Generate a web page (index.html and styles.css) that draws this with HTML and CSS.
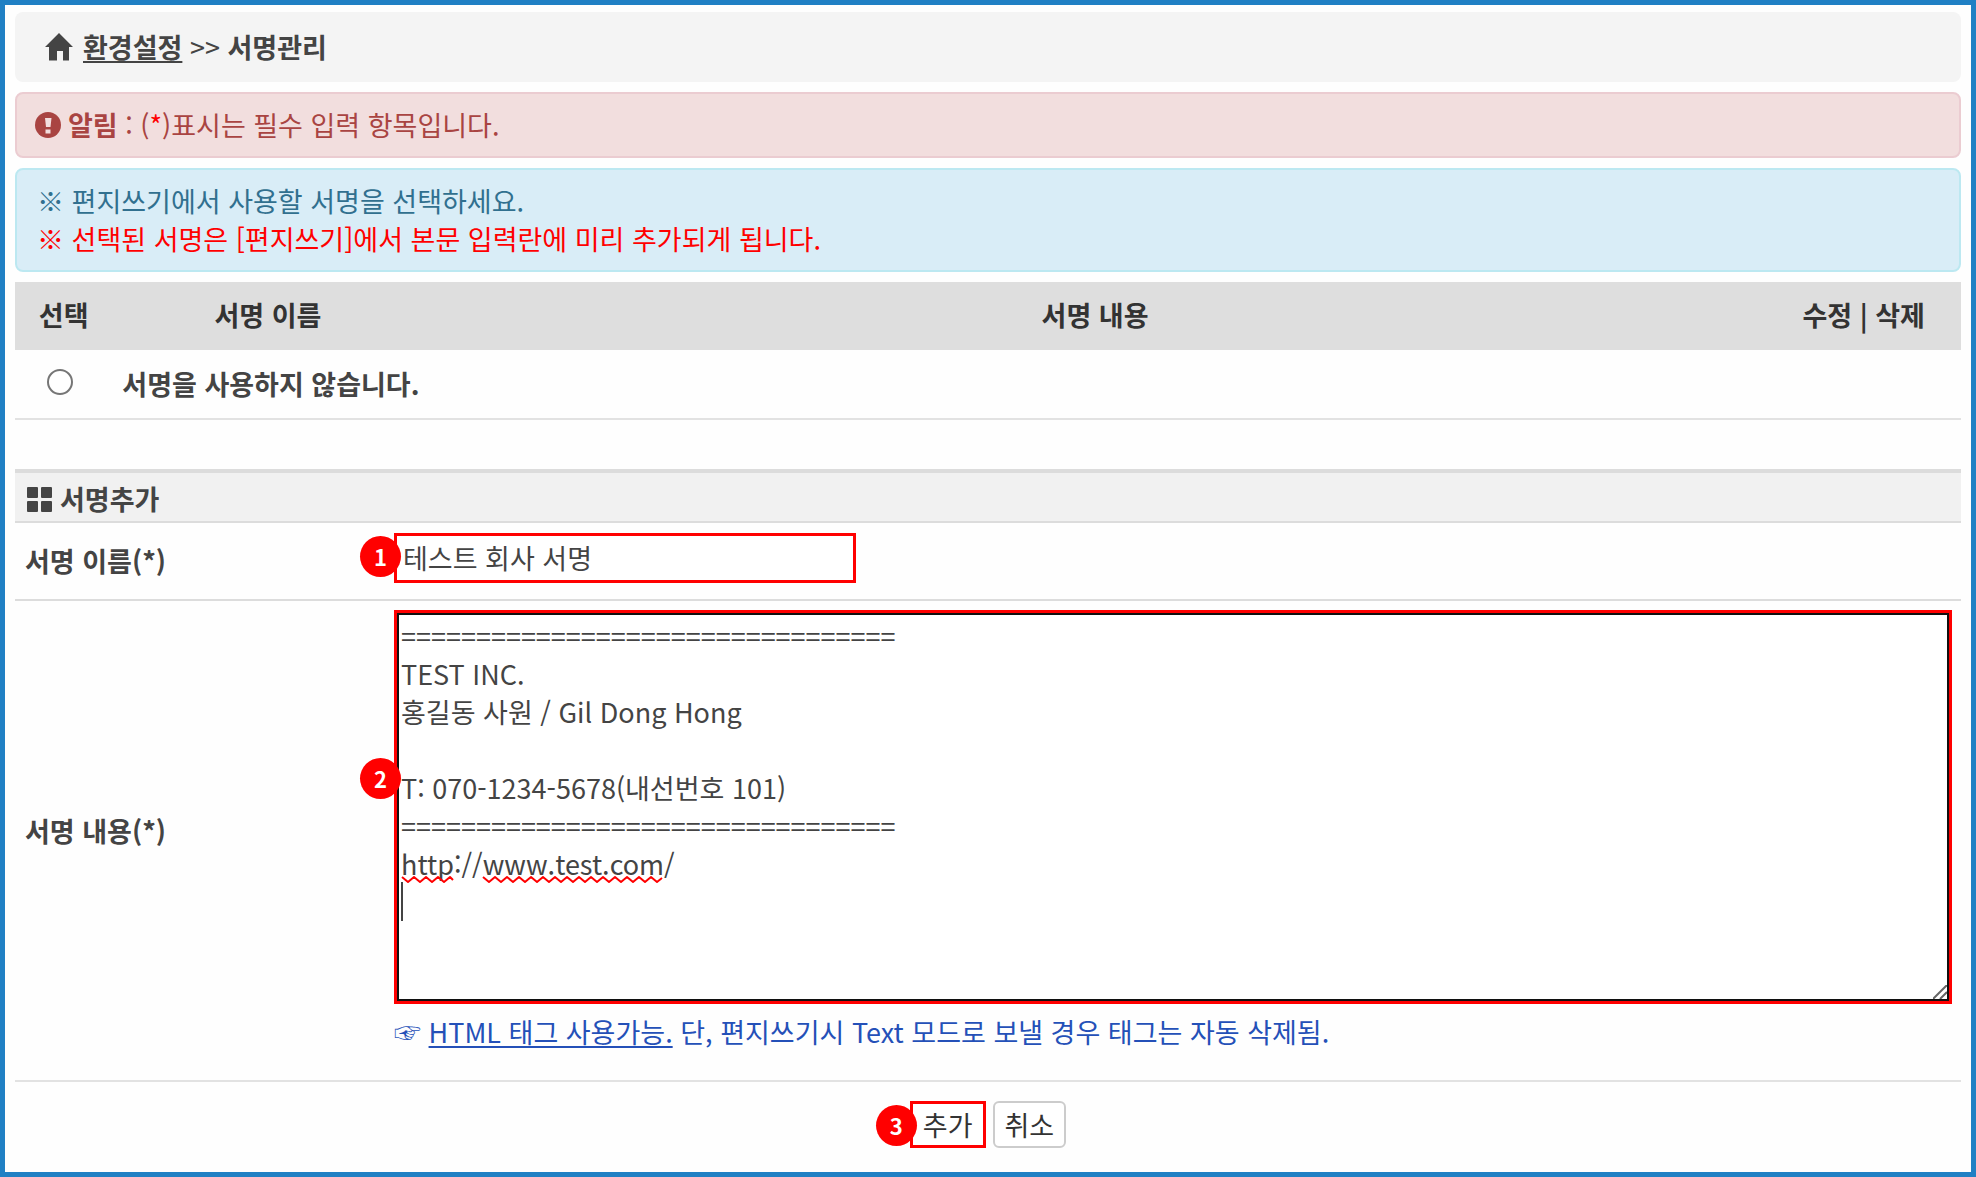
FILE: index.html
```html
<!DOCTYPE html>
<html lang="ko">
<head>
    <meta charset="UTF-8">
    <title>서명관리</title>
    <link rel="stylesheet" href="styles.css">
</head>
<body>
    <div class="breadcrumb">
        <svg class="icon-home" viewBox="0 0 28 28" aria-hidden="true">
            <path d="M14 0L28 14H24V27.5H18V18H12V27.5H4V14H0Z"/>
        </svg>
        <div><a href="#">환경설정</a> &gt;&gt; <strong>서명관리</strong></div>
    </div>

    <div class="alert alert-danger">
        <svg class="icon-alert" viewBox="0 0 26 26" aria-hidden="true">
            <circle cx="13" cy="13" r="13"/>
            <path class="mark" d="M10 6H16.500L15.500 15H11ZM10.500 17.500H15.500V21.500H10.500Z"/>
        </svg>
        <div><strong>알림</strong> : (<span class="red">*</span>)표시는 필수 입력 항목입니다.</div>
    </div>

    <div class="alert alert-info">
        <div>※ 편지쓰기에서 사용할 서명을 선택하세요.<br>
        <span class="red">※ 선택된 서명은 [편지쓰기]에서 본문 입력란에 미리 추가되게 됩니다.</span></div>
    </div>

    <form>
        <table class="sign-list">
            <thead>
                <tr>
                    <th class="col-select">선택</th>
                    <th class="col-name">서명 이름</th>
                    <th>서명 내용</th>
                    <th class="col-action">수정 | 삭제</th>
                </tr>
            </thead>
            <tbody>
                <tr>
                    <td class="cell-radio"><input type="radio" name="sign" id="signNone"></td>
                    <td class="cell-none" colspan="3"><label for="signNone">서명을 사용하지 않습니다.</label></td>
                </tr>
            </tbody>
        </table>

        <div class="section-title">
            <svg class="icon-grid" viewBox="0 0 25 25" aria-hidden="true">
                <rect width="11" height="11" rx="1"/>
                <rect x="14" width="11" height="11" rx="1"/>
                <rect y="14" width="11" height="11" rx="1"/>
                <rect x="14" y="14" width="11" height="11" rx="1"/>
            </svg>
            <strong>서명추가</strong>
        </div>

        <div class="form-row">
            <label for="signName">서명 이름(*)</label>
            <div class="field">
                <input type="text" id="signName" value="테스트 회사 서명">
                <span class="step">1</span>
            </div>
        </div>

        <div class="form-row">
            <label for="signContent">서명 내용(*)</label>
            <div class="field">
                <div class="editor">
                    <textarea id="signContent" spellcheck="false">=================================
TEST INC.
홍길동 사원 / Gil Dong Hong

T: 070-1234-5678(내선번호 101)
=================================
http://www.test.com/
</textarea>
                    <!-- spelling marks and caret -->
                    <svg class="marks" viewBox="0 0 264 46" aria-hidden="true">
                        <path class="wave" d="M1 2l6 5 6-5 6 5 6-5 6 5 6-5 6 5 6-5 3 3"/>
                        <path class="wave" d="M82 2l6 5 6-5 6 5 6-5 6 5 6-5 6 5 6-5 6 5 6-5 6 5 6-5 6 5 6-5 6 5 6-5 6 5 6-5 6 5 6-5 6 5 6-5 6 5 6-5 6 5 6-5 6 5 6-5 6 5 5-4"/>
                        <path class="caret" d="M1 7V46"/>
                    </svg>
                    <svg class="grip" viewBox="0 0 14 14" aria-hidden="true">
                        <path d="M0 14L14 0M7 14L14 7"/>
                    </svg>
                    <span class="step">2</span>
                </div>
                <p class="hint">☞ <a href="#">HTML 태그 사용가능.</a> 단, 편지쓰기시 Text 모드로 보낼 경우 태그는 자동 삭제됨.</p>
            </div>
        </div>

        <div class="buttons">
            <div class="field">
                <button type="submit" class="btn-add">추가</button>
                <span class="step">3</span>
            </div>
            <button type="button" class="btn-cancel">취소</button>
        </div>
    </form>
</body>
</html>
```

FILE: styles.css
```css
* {
    box-sizing: border-box;
}

body {
    min-height: 100vh;
    margin: 0;
    padding: 7px 10px 0;
    border: 5px solid #2080c4;
    background-color: #fefefe;
    color: #444;
    font-family: "Noto Sans CJK KR", sans-serif;
    font-size: 27px;
    line-height: 38px;
}

a {
    color: inherit;
    text-decoration: underline;
    text-decoration-thickness: 2px;
    text-underline-offset: 3px;
}

svg {
    display: block;
    flex: none;
    fill: currentColor;
}

.red {
    color: #f00;
}

.breadcrumb {
    display: flex;
    align-items: center;
    gap: 10px;
    margin-bottom: 10px;
    padding: 16px 30px;
    border-radius: 8px;
    background-color: #f4f4f4;
}

.breadcrumb a {
    font-weight: bold;
}

.icon-home {
    width: 28px;
    height: 28px;
}

.alert {
    display: flex;
    align-items: center;
    gap: 7px;
    margin-bottom: 10px;
    padding: 12px 18px;
    border: 2px solid;
    border-radius: 8px;
}

.alert-danger {
    border-color: #ebccd1;
    background-color: #f2dede;
    color: #a94442;
}

.alert-info {
    border-color: #bce8f1;
    background-color: #d9edf7;
    color: #31708f;
    padding: 12px 20px;
}

.icon-alert {
    width: 26px;
    height: 26px;
}

.icon-alert .mark {
    fill: #f2dede;
}

.sign-list {
    width: 100%;
    table-layout: fixed;
    border-spacing: 0;
}

.sign-list th {
    padding: 14px 0 16px;
    background-color: #dedede;
    color: #333;
}

.sign-list td {
    height: 70px;
    padding: 0 0 0 10px;
    border-bottom: 2px solid #e2e2e2;
}

.sign-list .cell-radio {
    padding: 0 8px 8px 0;
    line-height: 26px;
    text-align: center;
}

.cell-none {
    font-weight: bold;
}

.col-select {
    width: 5%;
}

.col-name {
    width: 16%;
}

.col-action {
    width: 10%;
}

input[type="radio"] {
    width: 26px;
    height: 26px;
    margin: 0;
    border: 2px solid #767676;
    border-radius: 50%;
    background-color: #fff;
    appearance: none;
    vertical-align: middle;
}

input[type="radio"]:checked {
    border-width: 8px;
}

.section-title {
    display: flex;
    align-items: center;
    gap: 8px;
    margin-top: 49px;
    padding: 7px 12px 3px;
    border-top: 4px solid #dcdcdc;
    border-bottom: 2px solid #dcdcdc;
    background-color: #f1f1f1;
}

.icon-grid {
    width: 25px;
    height: 25px;
}

.form-row {
    display: grid;
    grid-template-columns: 379px 1fr;
    align-items: center;
    padding: 9px 9px 9px 0;
}

.form-row + .form-row {
    border-top: 2px solid #dcdcdc;
}

.form-row > label {
    padding-left: 10px;
    font-weight: bold;
}

.field,
.editor {
    position: relative;
}

input[type="text"],
textarea,
button {
    color: inherit;
    font: inherit;
}

input[type="text"] {
    display: block;
    width: 462px;
    height: 50px;
    margin: 1px 0 7px;
    padding: 0 6px 1px;
    border: 3px solid #f00;
    background-color: #fff;
}

textarea {
    display: block;
    width: 100%;
    height: 394px;
    padding: 4px;
    border: 3px solid #f00;
    outline: 2px solid #101010;
    outline-offset: -5px;
    background-color: #fff;
    resize: none;
}

.marks {
    position: absolute;
    top: 265px;
    left: 7px;
    width: 264px;
    height: 46px;
    fill: none;
    pointer-events: none;
}

.wave {
    stroke: #f00;
    stroke-width: 2;
    stroke-linejoin: round;
}

.caret {
    stroke: #444;
    stroke-width: 2;
}

.grip {
    position: absolute;
    right: 5px;
    bottom: 5px;
    width: 14px;
    height: 14px;
    stroke: #666;
    stroke-width: 2;
    pointer-events: none;
}

.step {
    position: absolute;
    top: 4px;
    left: -34px;
    width: 41px;
    height: 41px;
    border-radius: 50%;
    background-color: #f00;
    color: #fff;
    font-size: 22px;
    font-weight: bold;
    line-height: 41px;
    text-align: center;
}

.editor .step {
    top: 148px;
}

.hint {
    margin: 9px 0 0;
    color: #2450b8;
}

.buttons {
    display: flex;
    justify-content: center;
    gap: 7px;
    margin-top: 20px;
    padding: 19px 0 24px;
    border-top: 2px solid #e2e2e2;
}

.btn-add,
.btn-cancel {
    height: 47px;
    padding: 0 10px;
    border: 3px solid #f00;
    background-color: #fff;
    color: #333;
    cursor: pointer;
}

.btn-cancel {
    border: 2px solid #ccc;
    border-radius: 6px;
}
```
